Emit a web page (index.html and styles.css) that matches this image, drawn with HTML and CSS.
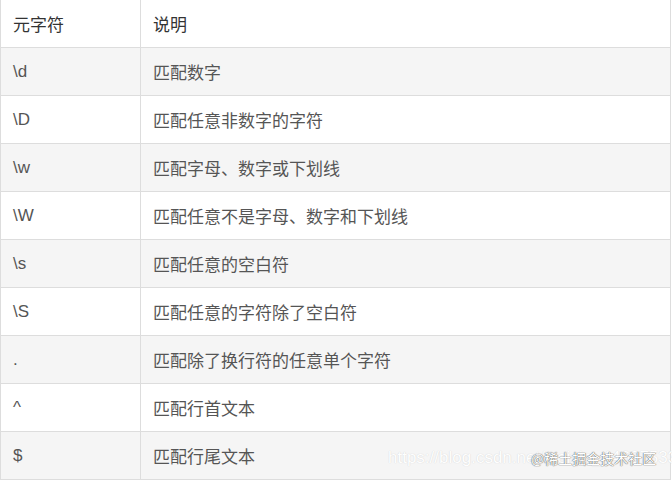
FILE: index.html
```html
<!DOCTYPE html>
<html>
<head>
<meta charset="utf-8">
<link rel="stylesheet" href="styles.css">
</head>
<body>
<div class="wrap">
<table class="tbl">
<thead>
<tr><th class="c1">元字符</th><th>说明</th></tr>
</thead>
<tbody>
<tr><td class="c1">\d</td><td>匹配数字</td></tr>
<tr><td class="c1">\D</td><td>匹配任意非数字的字符</td></tr>
<tr><td class="c1">\w</td><td>匹配字母、数字或下划线</td></tr>
<tr><td class="c1">\W</td><td>匹配任意不是字母、数字和下划线</td></tr>
<tr><td class="c1">\s</td><td>匹配任意的空白符</td></tr>
<tr><td class="c1">\S</td><td>匹配任意的字符除了空白符</td></tr>
<tr><td class="c1">.</td><td>匹配除了换行符的任意单个字符</td></tr>
<tr><td class="c1">^</td><td>匹配行首文本</td></tr>
<tr><td class="c1">$</td><td>匹配行尾文本</td></tr>
</tbody>
</table>
<div class="wm-url">https://blog.csdn.net/weixin_44637533</div>
<div class="wm">@稀土掘金技术社区</div>
</div>
</body>
</html>
```
FILE: styles.css
```css
html, body {
  margin: 0;
  padding: 0;
  background: #fff;
}
.wrap {
  position: relative;
  width: 672px;
  height: 482px;
  overflow: hidden;
}
.tbl {
  border-collapse: collapse;
  width: 671px;
  font-family: "Liberation Sans", "Noto Sans CJK SC", sans-serif;
  font-size: 17px;
  color: #555;
  margin-top: -1px;
}
.tbl th, .tbl td {
  border: 1px solid #ddd;
  height: 47px;
  padding: 0 12px;
  text-align: left;
}
.tbl th {
  font-weight: 400;
  color: #333;
}
.tbl .c1 {
  width: 115px;
}
.tbl tbody tr:nth-child(odd) {
  background: #f5f5f5;
}
.wm-url {
  position: absolute;
  left: 388px;
  top: 448px;
  font-family: "Liberation Sans", sans-serif;
  font-size: 17px;
  color: #fff;
  text-shadow: 0 0 1px #c8c8c8;
  white-space: nowrap;
  opacity: 0.9;
}
.wm {
  position: absolute;
  left: 531px;
  top: 448px;
  font-family: "Noto Sans CJK SC", sans-serif;
  font-size: 14px;
  color: #fff;
  text-shadow: 0 0 1px #555, 0 0 1px #555;
  white-space: nowrap;
}
```
